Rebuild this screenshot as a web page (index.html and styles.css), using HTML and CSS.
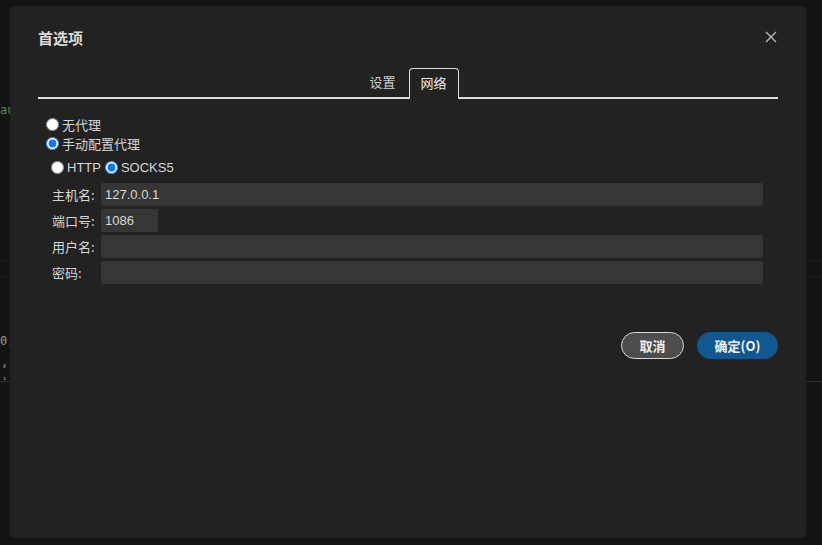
FILE: index.html
```html
<!DOCTYPE html>
<html lang="zh">
<head>
<meta charset="utf-8">
<link rel="stylesheet" href="styles.css">
</head>
<body>
<div class="backdrop">
  <div class="bg-code c1">au</div>
  <div class="bg-band b1"></div>
  <div class="bg-band b2"></div>
  <div class="bg-code c2">0,</div>
  <div class="bg-code c3">,</div>
  <div class="bg-code c4">'</div>
  <div class="bg-line l1"></div>
</div>
<div class="dialog">
  <div class="header">
    <h1 class="title">首选项</h1>
    <button class="close" aria-label="关闭">
      <svg width="12" height="12" viewBox="0 0 12 12"><path d="M1 1L11 11M11 1L1 11" stroke="#bdbdbd" stroke-width="1.3" fill="none"/></svg>
    </button>
  </div>
  <div class="tabs">
    <span class="tab">设置</span>
    <span class="tab active">网络</span>
  </div>
  <div class="content">
    <label class="radio-row"><input type="radio" name="proxy"><span>无代理</span></label>
    <label class="radio-row"><input type="radio" name="proxy" checked><span>手动配置代理</span></label>
    <div class="proto-row">
      <label class="proto"><input type="radio" name="proto"><span>HTTP</span></label>
      <label class="proto"><input type="radio" name="proto" checked><span>SOCKS5</span></label>
    </div>
    <div class="form">
      <div class="field"><span class="lbl">主机名:</span><input class="inp" type="text" value="127.0.0.1"></div>
      <div class="field"><span class="lbl">端口号:</span><input class="inp port" type="text" value="1086"></div>
      <div class="field"><span class="lbl">用户名:</span><input class="inp" type="text" value=""></div>
      <div class="field"><span class="lbl">密码:</span><input class="inp" type="password" value=""></div>
    </div>
  </div>
  <div class="footer">
    <button class="btn cancel">取消</button>
    <button class="btn ok">确定(O)</button>
  </div>
</div>
</body>
</html>
```

FILE: styles.css
```css
html, body {
  margin: 0;
  padding: 0;
}
body {
  width: 822px;
  height: 545px;
  background: #141414;
  position: relative;
  overflow: hidden;
  font-family: "Noto Sans CJK SC", "Liberation Sans", sans-serif;
  color: #d6d6d6;
}
.backdrop {
  position: absolute;
  inset: 0;
}
.bg-code {
  position: absolute;
  left: 0;
  font-family: "DejaVu Sans Mono", monospace;
  font-size: 12px;
  color: #6f8f5a;
  line-height: 14px;
}
.c1 { top: 103px; left: 0; color: #5f8a45; }
.c2 { top: 334px; left: 0; color: #8ea07a; }
.c3 { top: 355px; left: 1px; color: #9a9a9a; }
.c4 { top: 375px; left: 1px; color: #8a8a8a; }
.bg-band {
  position: absolute;
  left: 0;
  right: 0;
  height: 2px;
  background: #1b1b1b;
}
.b1 { top: 260px; }
.b2 { top: 276px; }
.bg-line {
  position: absolute;
  left: 0;
  right: 0;
  height: 1px;
  background: #2f2f2f;
}
.l1 { top: 381px; }

.dialog {
  position: absolute;
  left: 10px;
  top: 6px;
  width: 796px;
  height: 532px;
  background: #222222;
  border-radius: 5px;
  box-sizing: border-box;
  padding: 0 28px;
}
.header {
  display: flex;
  align-items: center;
  justify-content: space-between;
  height: 62px;
}
.title {
  margin: 0;
  font-size: 15px;
  font-weight: 700;
  color: #dcdcdc;
  padding-top: 1px;
}
.close {
  background: none;
  border: 0;
  padding: 0;
  width: 12px;
  height: 12px;
  margin-right: 1px;
  display: flex;
}
.tabs {
  display: flex;
  justify-content: center;
  align-items: flex-end;
  height: 31px;
  border-bottom: 2px solid #dcdcdc;
  box-sizing: border-box;
  padding-right: 1px;
}
.tab {
  font-size: 13px;
  color: #cfcfcf;
  height: 29px;
  line-height: 28px;
  box-sizing: border-box;
  padding: 0 13px;
}
.tab.active {
  border: 1.5px solid #dcdcdc;
  border-bottom: 0;
  border-radius: 4px 4px 0 0;
  color: #ececec;
  background: #222;
  margin-bottom: -2px;
  height: 31px;
  padding: 0 11px;
}
.content {
  padding: 16px 0 0 8px;
  font-size: 13px;
}
.radio-row {
  display: flex;
  align-items: center;
  height: 19px;
  gap: 3px;
}
.radio-row input, .proto input {
  margin: 0;
  width: 13px;
  height: 13px;
  accent-color: #1a73e8;
}
.proto-row {
  display: flex;
  align-items: center;
  height: 20px;
  padding-left: 5px;
  gap: 4px;
  margin-top: 4px;
}
.proto {
  display: flex;
  align-items: center;
  gap: 3px;
  font-family: "Liberation Sans", "Noto Sans CJK SC", sans-serif;
}
.form {
  display: flex;
  flex-direction: column;
  gap: 3px;
  margin-top: 6px;
  padding-left: 6px;
}
.field {
  display: flex;
  align-items: center;
  height: 23px;
}
.lbl {
  width: 49px;
  color: #d6d6d6;
  font-size: 13px;
}
.inp {
  box-sizing: border-box;
  width: 662px;
  height: 23px;
  background: #363636;
  border: 0;
  border-radius: 2px;
  padding: 0 4px;
  color: #d8d8d8;
  font-family: "Liberation Sans", sans-serif;
  font-size: 13px;
  outline: none;
}
.inp.port {
  width: 57px;
}
.footer {
  display: flex;
  justify-content: flex-end;
  gap: 13px;
  margin-top: 48px;
}
.btn {
  height: 27px;
  border-radius: 14px;
  font-family: "Noto Sans CJK SC", "Liberation Sans", sans-serif;
  font-size: 13px;
  font-weight: 700;
  color: #f2f2f2;
  box-sizing: border-box;
  cursor: default;
  padding: 0;
}
.cancel {
  width: 63px;
  background: #4d4d4d;
  border: 1.5px solid #d8d8d8;
}
.ok {
  width: 81px;
  background: #12578f;
  border: 0;
}
```
